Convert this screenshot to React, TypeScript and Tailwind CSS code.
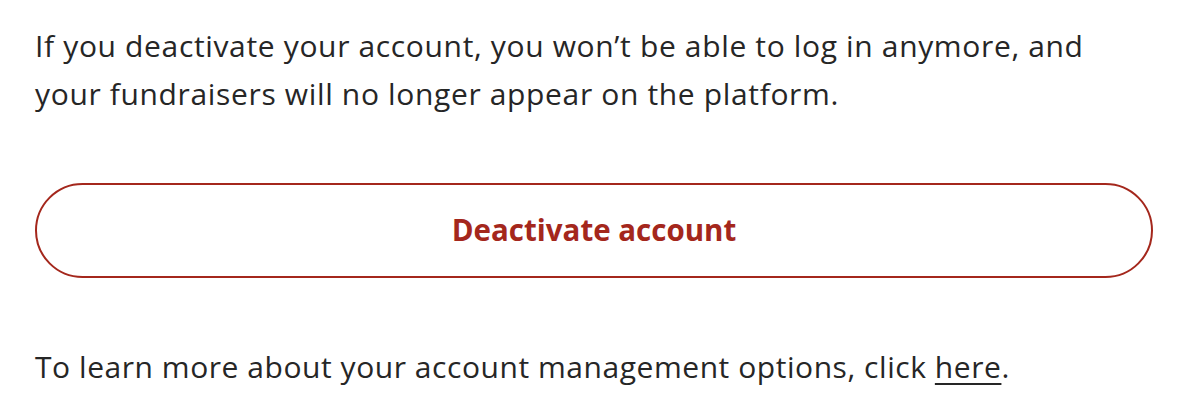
import React from 'react';

const App: React.FC = () => {
  return (
    <div
      className="w-[1178px] h-[402px] bg-white pl-[35px] pr-[25px] pt-[22px] text-[#262626]"
      style={{ fontFamily: '"Open Sans", sans-serif' }}
    >
      {/* Warning copy */}
      <p className="text-[30px] leading-[48px] tracking-[0.65px]">
        If you deactivate your account, you won’t be able to log in anymore, and
        <br />
        your fundraisers will no longer appear on the platform.
      </p>

      {/* Deactivate button */}
      <button className="mt-[65px] w-full h-[95px] rounded-full border-2 border-[#a4271c] bg-white text-[#a4271c] text-[29.5px] font-bold">
        Deactivate account
      </button>

      <p className="mt-[65px] text-[30px] leading-[48px] tracking-[0.55px]">
        To learn more about your account management options, click{' '}
        <a href="#" className="underline decoration-2 underline-offset-[5px]">
          here
        </a>
        .
      </p>
    </div>
  );
};

export default App;
